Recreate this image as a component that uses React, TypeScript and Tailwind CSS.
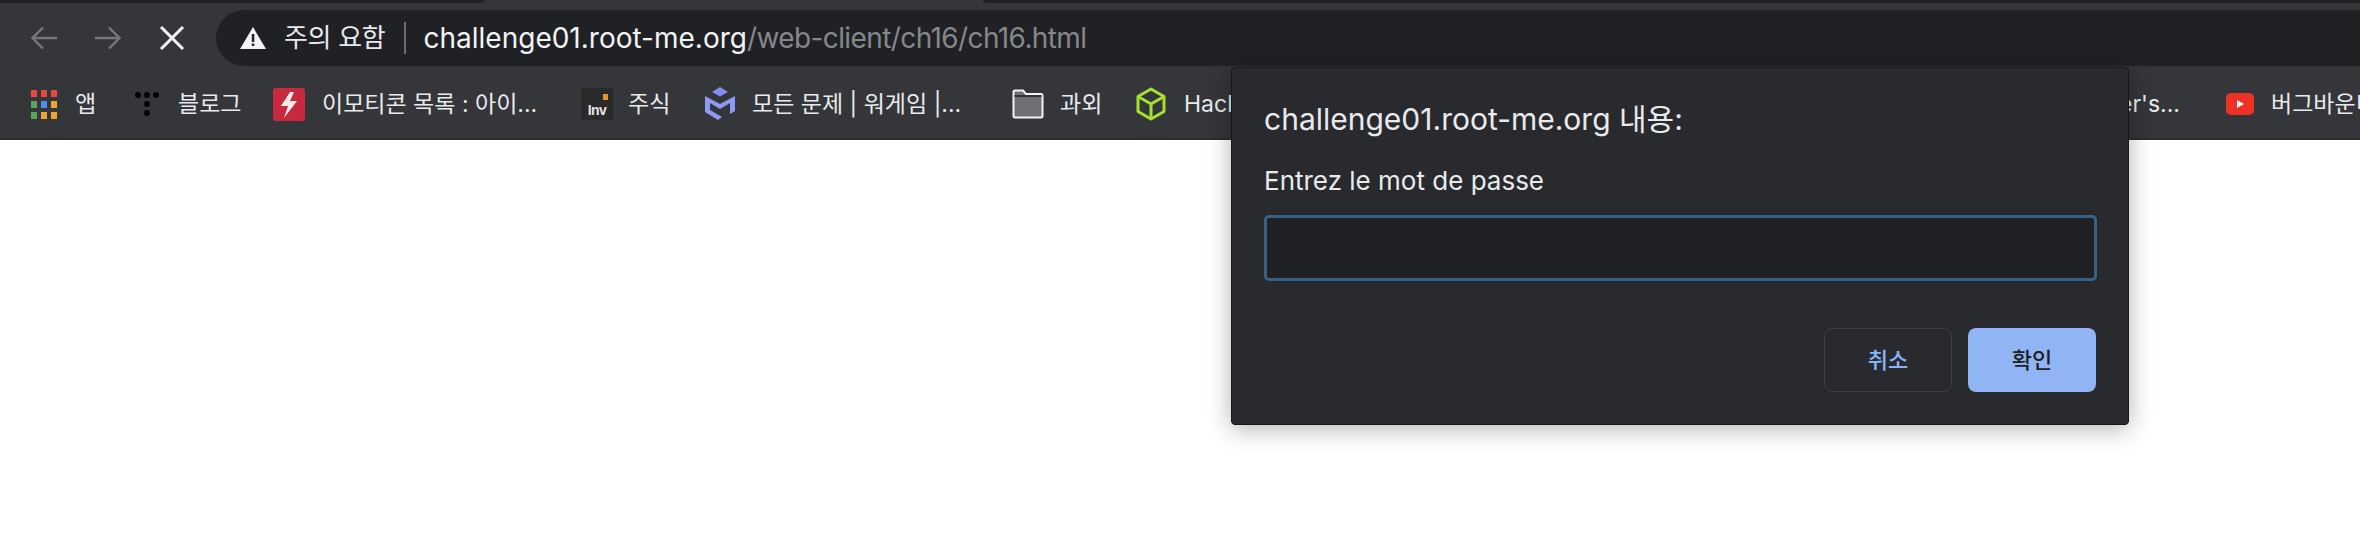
import React from "react";

const ff = "font-['Inter','Noto_Sans_CJK_KR',sans-serif]";

function Item({ w, icon, label, gap = "gap-[18px]" }: { w: string; icon: React.ReactNode; label: string; gap?: string }) {
  return (
    <div className={`${w} shrink-0 flex items-center ${gap} overflow-hidden`}>
      {icon}
      <span className="text-[23px] leading-none text-[#e8eaed] whitespace-nowrap">{label}</span>
    </div>
  );
}

const Apps = () => {
  const c = ["#e8483d", "#e8483d", "#e8483d", "#58a55c", "#4a90f0", "#eca52e", "#58a55c", "#eca52e", "#eca52e"];
  return (
    <div className="grid grid-cols-3 gap-[4px] w-[26px] shrink-0">
      {c.map((x, i) => (
        <div key={i} className="h-[7px]" style={{ background: x }} />
      ))}
    </div>
  );
};

const Dots = () => (
  <svg width="26" height="30" viewBox="0 0 26 30" className="shrink-0">
    <g fill="#000">
      <circle cx="4" cy="6" r="3" />
      <circle cx="13" cy="6" r="3" />
      <circle cx="22" cy="6" r="3" />
      <circle cx="13" cy="15" r="3" />
      <circle cx="13" cy="24" r="3" />
    </g>
  </svg>
);

const Bolt = () => (
  <svg width="32" height="33" viewBox="0 0 32 33" className="shrink-0">
    <rect width="32" height="33" rx="3" fill="#c72a3e" />
    <path d="M17 4 L8 18 L15 18 L11 30 L24 13 L17 13 L21 4 Z" fill="#fbeaec" />
  </svg>
);

const Inv = () => (
  <div className="relative w-[32px] h-[32px] shrink-0 bg-[#2a2a2a] flex items-end justify-center pb-[3px]">
    <span className="text-[14px] leading-none font-bold text-[#e8e8e8] tracking-[-0.5px] font-['Liberation_Sans',sans-serif]">Inv</span>
    <div className="absolute top-[6px] right-[5px] w-[5px] h-[6px] bg-[#e0962a]" />
  </div>
);

const MLogo = () => (
  <svg width="32" height="34" viewBox="0 0 32 34" className="shrink-0">
    <path d="M16 0 L24 5 L16 9.500 L8 5 Z" fill="#7f8df0" />
    <path d="M1 9 L16 17 L31 9 L31 24 L26 27 L26 16 L16 22 L6 16 L6 23 L18 30 L14 33 L1 25 Z" fill="#8d9bf2" />
  </svg>
);

const Folder = () => (
  <svg width="32" height="30" viewBox="0 0 32 30" className="shrink-0">
    <path d="M1.500 3 Q1.500 1.500 3 1.500 L11 1.500 L14 5 L29 5 Q30.500 5 30.500 6.500 L30.500 27 Q30.500 28.500 29 28.500 L3 28.500 Q1.500 28.500 1.500 27 Z" fill="#6f7073" stroke="#f1f3f4" strokeWidth="2" />
    <path d="M2.500 6 L29.500 6 L29.500 8 L2.500 8 Z" fill="#35363a" />
  </svg>
);

const Hex = () => (
  <svg width="30" height="34" viewBox="0 0 30 34" className="shrink-0" fill="none" stroke="#a4e22e" strokeWidth="3" strokeLinejoin="round">
    <path d="M15 2 L28 9.500 L28 24.500 L15 32 L2 24.500 L2 9.500 Z" />
    <path d="M2 9.500 L15 17 L28 9.500 M15 17 L15 32" />
  </svg>
);

const Yt = () => (
  <svg width="28" height="22" viewBox="0 0 28 22" className="shrink-0">
    <rect width="28" height="22" rx="5" fill="#ee3124" />
    <path d="M11 7 L18 11 L11 15 Z" fill="#fff" />
  </svg>
);

export default function App() {
  return (
    <div className={`relative w-[2360px] h-[552px] bg-white overflow-hidden ${ff}`}>
      <div className="bg-[#35363a] h-[140px] border-b-2 border-[#2a2b2e] flex flex-col">
        <div className="h-[3px] flex justify-between shrink-0">
          <div className="w-[485px] bg-[#202124] rounded-br-[8px]" />
          <div className="w-[1377px] bg-[#202124] rounded-bl-[8px]" />
        </div>
        <div className="h-[63px] shrink-0 flex items-end">
          <div className="flex items-center w-[216px] h-[56px] pl-[31px] gap-[38px] shrink-0">
            <svg width="26" height="24" viewBox="0 0 26 24" fill="none" stroke="#77787b" strokeWidth="2.400" className="shrink-0">
              <path d="M26 12 L2 12 M12 1.500 L1.500 12 L12 22.500" />
            </svg>
            <svg width="26" height="24" viewBox="0 0 26 24" fill="none" stroke="#77787b" strokeWidth="2.400" className="shrink-0">
              <path d="M0 12 L24 12 M14 1.500 L24.500 12 L14 22.500" />
            </svg>
            <svg width="26" height="24" viewBox="0 0 26 24" fill="none" stroke="#f1f3f4" strokeWidth="3" className="shrink-0">
              <path d="M2 1 L24 23 M24 1 L2 23" />
            </svg>
          </div>
          <div className="flex-1 h-[56px] bg-[#202124] rounded-l-[28px] flex items-center pl-[24px] gap-[20px]">
            <svg width="26" height="22" viewBox="0 0 26 22" className="shrink-0">
              <path d="M13 0 L26 22 L0 22 Z" fill="#f1f3f4" />
              <rect x="11.800" y="7" width="2.500" height="8" fill="#202124" />
              <rect x="11.800" y="16.500" width="2.500" height="2.500" fill="#202124" />
            </svg>
            <span className="-ml-[2px] text-[26px] leading-[32px] text-[#e8eaed] tracking-[-0.3px] whitespace-nowrap">주의 요함</span>
            <div className="-ml-[2px] w-[2px] h-[32px] bg-[#6b6c6f] shrink-0" />
            <span className="-ml-[2px] text-[28px] leading-[34px] text-[#f1f3f4] whitespace-nowrap">
              challenge01.root-me.org<span className="text-[#85878b] tracking-[-0.6px]">/web-client/ch16/ch16.html</span>
            </span>
          </div>
        </div>
        <div className="flex-1 flex items-center pl-[31px] pt-[4px]">
          <Item w="w-[103px]" icon={<Apps />} label="앱" />
          <Item w="w-[139px]" icon={<Dots />} label="블로그" gap="gap-[18px]" />
          <Item w="w-[308px]" icon={<Bolt />} label="이모티콘 목록 : 아이..." gap="gap-[17px]" />
          <Item w="w-[123px]" icon={<Inv />} label="주식" gap="gap-[15px]" />
          <Item w="w-[308px]" icon={<MLogo />} label="모든 문제 | 워게임 |..." gap="gap-[16px]" />
          <Item w="w-[124px]" icon={<Folder />} label="과외" gap="gap-[16px]" />
          <Item w="w-[95px]" icon={<Hex />} label="HackTheBox" gap="gap-[18px]" />
          <div className="w-[898px] shrink-0" />
          <div className="w-[51px] shrink-0 flex justify-end overflow-hidden">
            <span className="text-[23px] leading-none text-[#e8eaed] whitespace-nowrap">Hacker's...</span>
          </div>
          <div className="ml-[46px] flex items-center gap-[17px] shrink-0">
            <Yt />
            <span className="text-[23px] leading-none text-[#e8eaed] whitespace-nowrap">버그바운티</span>
          </div>
        </div>
      </div>

      <div className="absolute left-[1231px] top-[67px] w-[898px] h-[358px] bg-[#292a2d] border border-[#16171a] rounded-[4px] shadow-[0_4px_24px_rgba(0,0,0,0.3)] flex flex-col px-[32px] pt-[33px]">
        <div className="text-[30px] leading-[36px] text-[#e8eaed] whitespace-nowrap">challenge01.root-me.org 내용:</div>
        <div className="mt-[29px] text-[26px] leading-[30px] text-[#e8eaed]">Entrez le mot de passe</div>
        <div className="mt-[19px] h-[66px] w-[833px] rounded-[5px] bg-[#202124] border-[3px] border-[#386186]" />
        <div className="mt-[47px] flex justify-end gap-[16px] w-[832px]">
          <div className="w-[128px] h-[64px] rounded-[8px] border border-[#3c4043] flex items-center justify-center text-[22px] font-medium text-[#8ab4f8]">취소</div>
          <div className="w-[128px] h-[64px] rounded-[8px] bg-[#90b4f4] flex items-center justify-center text-[22px] font-medium text-[#202124]">확인</div>
        </div>
      </div>
    </div>
  );
}
